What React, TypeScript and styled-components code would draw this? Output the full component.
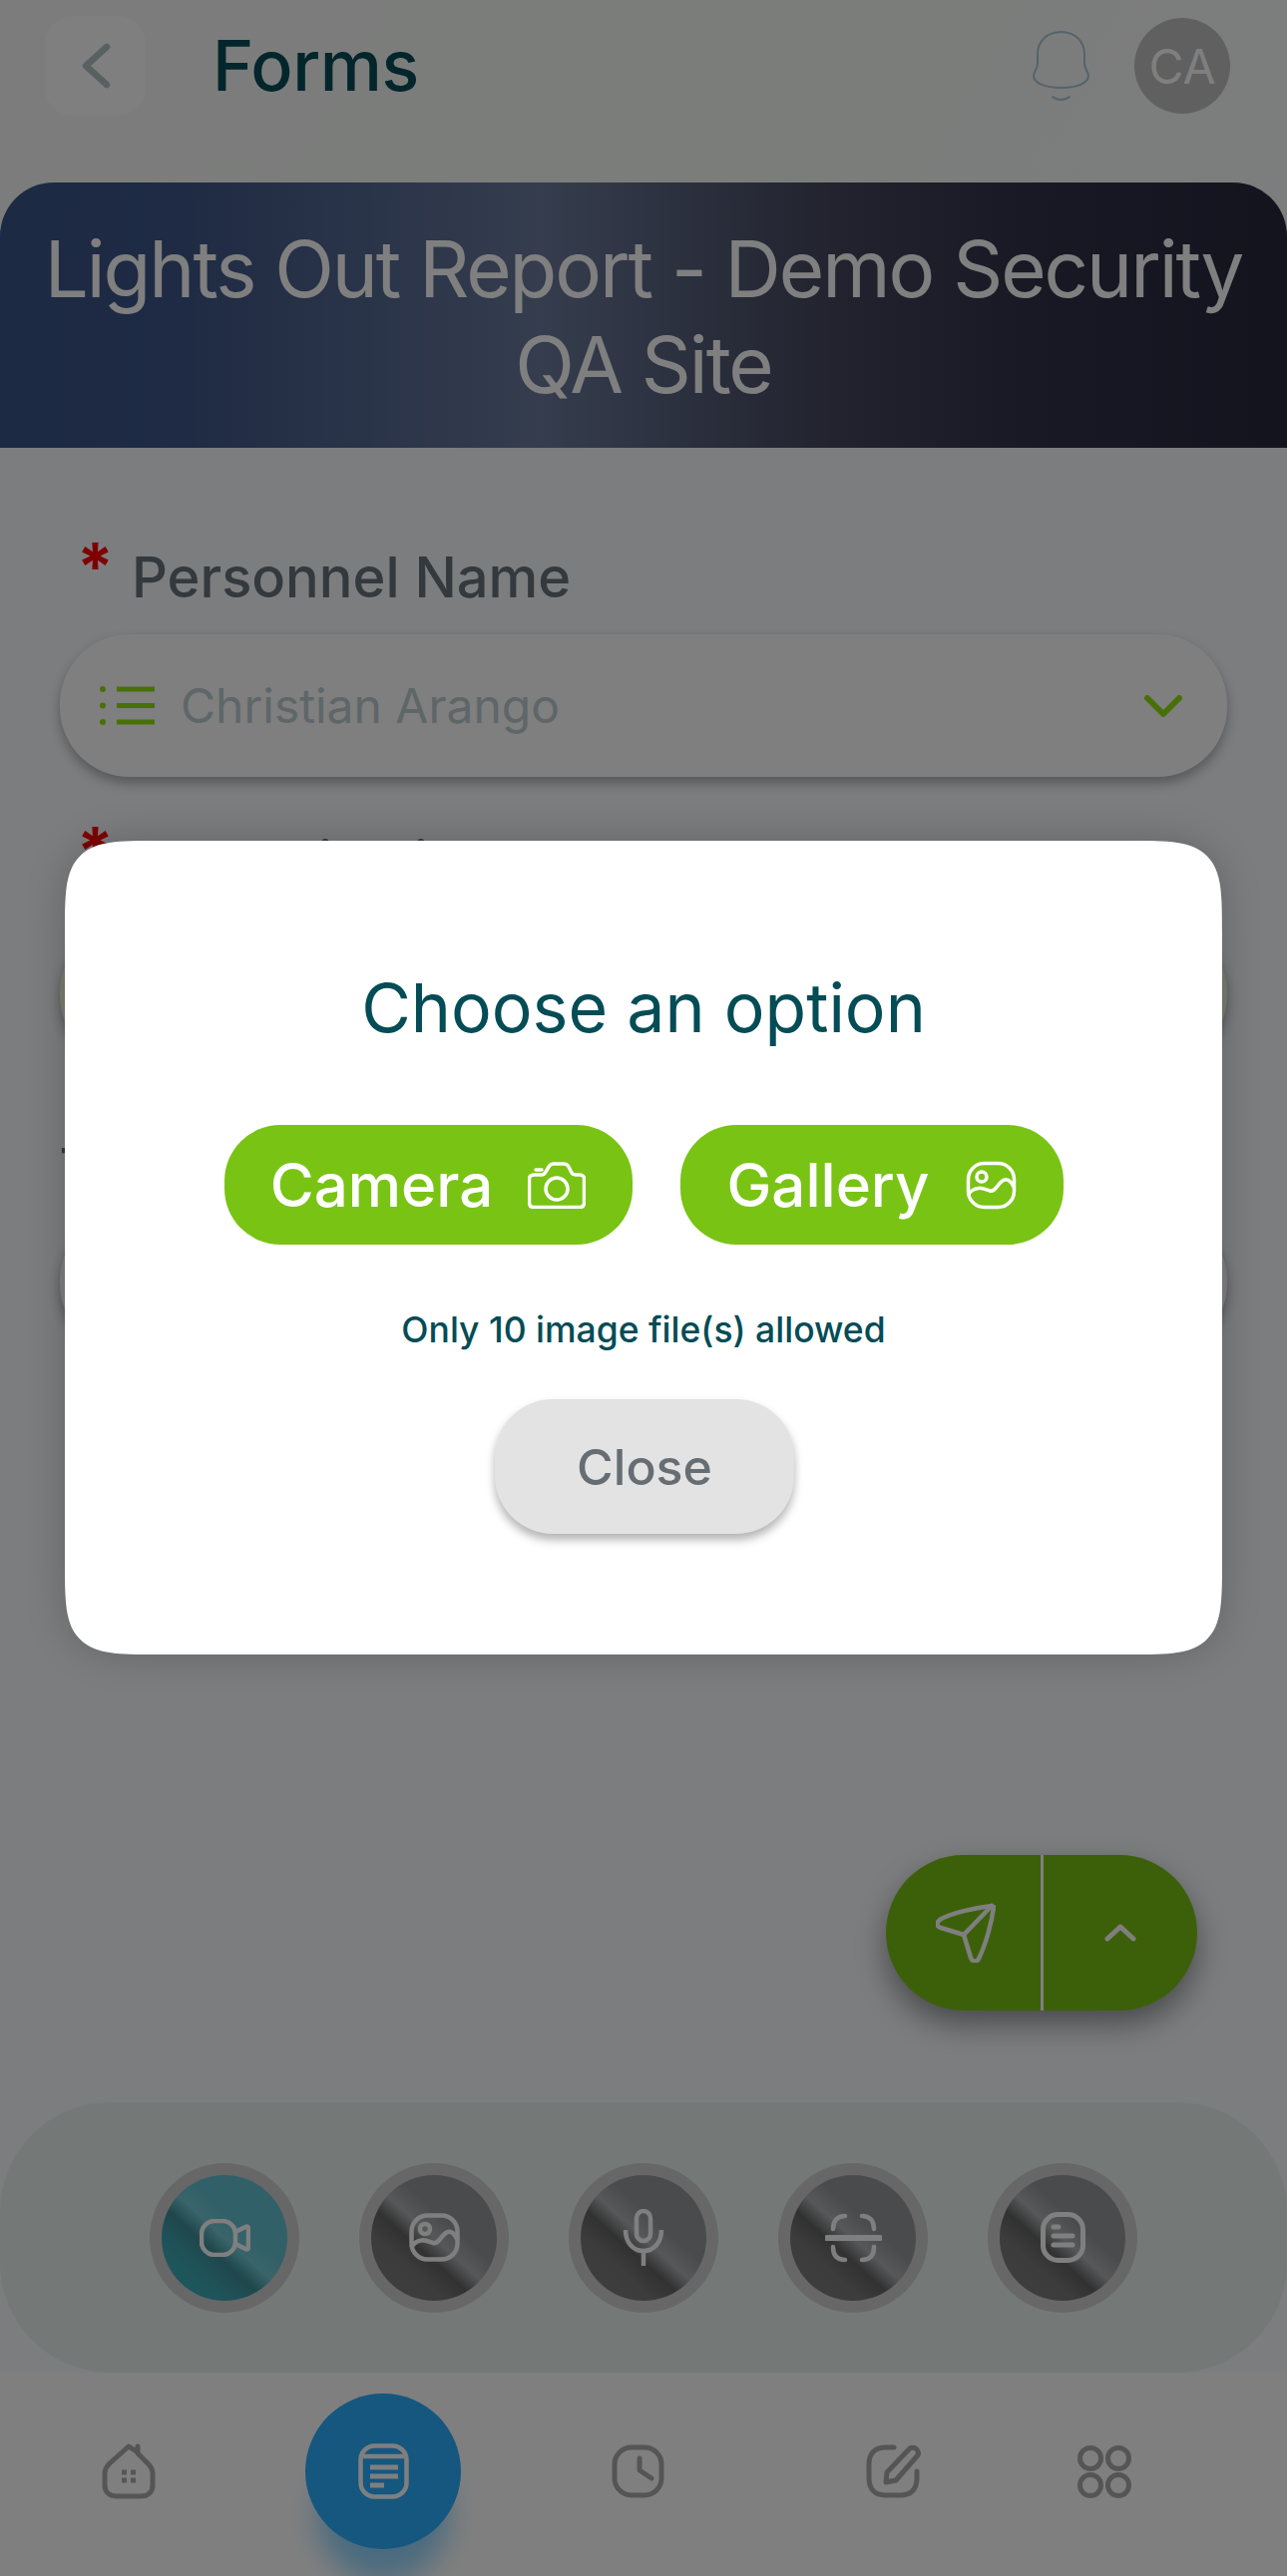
import React from "react";
import styled, { createGlobalStyle } from "styled-components";

const Global = createGlobalStyle`
  html, body { margin: 0; padding: 0; background: #f8fafe; }
  * { box-sizing: border-box; }
  body { font-family: Inter, "Noto Sans", sans-serif; }
`;

const Page = styled.div`
  position: relative;
  width: 1290px;
  height: 2583px;
  overflow: hidden;
  display: flex;
  flex-direction: column;
  background: #f8fafe;
`;

const TopArea = styled.div`
  background: linear-gradient(120deg, #f8f9f8 0%, #f6faf6 55%, #fafafd 100%);
`;

const Header = styled.header`
  height: 183px;
  padding: 16px 57px 67px 45px;
  display: flex;
  align-items: center;
`;

const BackButton = styled.div`
  width: 101px;
  height: 100px;
  border-radius: 28px;
  background: #ffffff;
  display: flex;
  align-items: center;
  justify-content: center;
`;

const PageTitle = styled.h1`
  margin: 0 0 0 67px;
  flex: 1;
  font-size: 70px;
  font-weight: 500;
  line-height: 1;
  letter-spacing: -0.4px;
  color: #044c56;
`;

const Bell = styled.svg`
  width: 57px;
  height: 72px;
  margin-right: 45px;
`;

const Avatar = styled.div`
  width: 96px;
  height: 96px;
  border-radius: 50%;
  background: #c0c0c0;
  color: #fff;
  font-size: 48px;
  display: flex;
  align-items: center;
  justify-content: center;
`;

const Banner = styled.div`
  height: 266px;
  border-radius: 54px 54px 0 0;
  padding: 3px 20px 0;
  background: linear-gradient(90deg, #3a5488 0%, #3e5688 14%, #6a7a9c 42%, #44465c 65%, #32324a 80%, #28283e 100%);
  display: flex;
  align-items: center;
  justify-content: center;
  text-align: center;
  color: #fff;
  font-size: 78px;
  letter-spacing: -2.05px;
  line-height: 96px;
`;

const Form = styled.div`
  padding: 93px 42px 0 60px;
  display: flex;
  flex-direction: column;
`;

const Group = styled.div`
  height: 285px;
`;

const LabelRow = styled.div<{ $indent: boolean; $h: number; $gap: number }>`
  height: ${(p) => p.$h}px;
  padding-left: ${(p) => (p.$indent ? "20px" : "0")};
  display: flex;
  align-items: center;
  margin-bottom: ${(p) => p.$gap}px;
  position: relative;
`;

const Star = styled.span`
  position: absolute;
  left: 17px;
  top: -7px;
  font-size: 66px;
  line-height: 1;
  font-weight: 700;
  color: #ff0000;
`;

const LabelText = styled.span<{ $offset: number }>`
  margin-left: ${(p) => p.$offset}px;
  font-size: 56px;
  font-weight: 500;
  color: #66727a;
`;

const Field = styled.div<{ $tint?: string }>`
  width: 1170px;
  height: 143px;
  border-radius: 70px;
  background: ${(p) => p.$tint || "#ffffff"};
  box-shadow: 0 6px 12px rgba(0, 0, 0, 0.3);
  padding: 0 45px 0 40px;
  display: flex;
  align-items: center;
  color: #bcccd0;
  font-size: 48px;
`;

const FieldValue = styled.span`
  flex: 1;
  margin-left: 24px;
`;

const Spring = styled.div`
  flex: 1;
`;

const FabRow = styled.div`
  display: flex;
  justify-content: flex-end;
  padding-right: 90px;
  margin-bottom: 92px;
`;

const Fab = styled.div`
  width: 312px;
  height: 156px;
  border-radius: 78px;
  background: #78c014;
  box-shadow: 0 14px 30px rgba(0, 0, 0, 0.4);
  display: flex;
  overflow: hidden;
`;

const FabSide = styled.div<{ $divider?: boolean }>`
  flex: 1;
  display: flex;
  align-items: center;
  justify-content: center;
  ${(p) => p.$divider && "border-right: 3px solid #fff;"}
`;

const SendIcon = styled.svg`
  margin-left: 6px;
`;

const Tray = styled.div`
  height: 271px;
  border-radius: 110px;
  background: #e8f2f0;
  display: flex;
  align-items: center;
  justify-content: center;
  gap: 60px;
`;

const Ring = styled.div`
  width: 150px;
  height: 150px;
  border-radius: 50%;
  background: #cecece;
  padding: 12px;
`;

const Metal = styled.div<{ $active?: boolean }>`
  width: 100%;
  height: 100%;
  border-radius: 50%;
  display: flex;
  align-items: center;
  justify-content: center;
  background: ${(p) =>
    p.$active
      ? "linear-gradient(222deg, #64c0d0 0%, #64c0d0 38%, #72c8d4 50%, #3e8e98 60%, #3fa4b0 72%, #38b0bc 88%, #3a8e96 100%)"
      : "linear-gradient(222deg, #949698 0%, #949698 38%, #aeb0b2 50%, #646464 60%, #787878 72%, #7c7c7e 88%, #6e6e6e 100%)"};
`;

const Nav = styled.nav`
  flex: 0 0 204px;
  background: #fff;
  padding: 21px 0 0 0;
  display: flex;
  align-items: flex-start;
`;

const NavSlot = styled.div<{ $left: number }>`
  margin-left: ${(p) => p.$left}px;
  height: 156px;
  display: flex;
  align-items: center;
`;

const NavActive = styled.div`
  width: 156px;
  height: 156px;
  border-radius: 50%;
  background: #2aaeff;
  box-shadow: 0 44px 28px -12px rgba(42, 174, 255, 0.5);
  display: flex;
  align-items: center;
  justify-content: center;
`;

const Overlay = styled.div`
  position: absolute;
  inset: 0;
  background: rgba(0, 0, 0, 0.5);
  display: flex;
  justify-content: center;
  align-items: flex-start;
  padding-top: 843px;
`;

const Modal = styled.div`
  width: 1160px;
  height: 816px;
  border-radius: 68px;
  @supports (corner-shape: squircle) {
    border-radius: 96px;
    corner-shape: squircle;
  }
  background: #fff;
  box-shadow: 0 0 40px rgba(0, 0, 0, 0.2);
  padding-top: 124px;
  display: flex;
  flex-direction: column;
  align-items: center;
`;

const ModalTitle = styled.h2`
  margin: 0;
  height: 86px;
  font-size: 68px;
  line-height: 86px;
  font-weight: 400;
  color: #044c56;
`;

const Choices = styled.div`
  margin-top: 75px;
  display: flex;
  gap: 48px;
`;

const Choice = styled.button<{ $w: number; $gap: number }>`
  width: ${(p) => p.$w}px;
  height: 120px;
  border: 0;
  border-radius: 56px;
  background: #79c314;
  color: #fff;
  font-family: inherit;
  font-size: 60px;
  font-weight: 450;
  display: flex;
  align-items: center;
  justify-content: center;
  gap: ${(p) => p.$gap}px;
  padding: 0;
`;

const Hint = styled.p`
  margin: 64px 0 0;
  height: 44px;
  line-height: 44px;
  font-size: 35.5px;
  font-weight: 500;
  color: #044c56;
`;

const CloseBtn = styled.button`
  margin: 47px 0 0 2px;
  width: 300px;
  height: 135px;
  border: 0;
  border-radius: 58px;
  background: #e3e3e3;
  box-shadow: 0 6px 10px rgba(0, 0, 0, 0.3);
  color: #666d73;
  font-family: inherit;
  font-size: 50px;
  font-weight: 500;
`;

const Line = { fill: "none", strokeLinecap: "round", strokeLinejoin: "round" } as const;

const GalleryIcon = ({ c = "#fff", w = 5 }: { c?: string; w?: number }) => (
  <svg width="51" height="49" viewBox="0 0 51 49" {...Line} stroke={c} strokeWidth={w}>
    <rect x="2.5" y="2.5" width="46" height="44" rx="16" />
    <circle cx="16" cy="16" r="5" />
    <path d="M3 33C10 24 18 28 24 30C30 32 33 20 39 19C43 18 46 22 48 26" />
  </svg>
);

const DocIcon = () => (
  <svg width="45" height="51" viewBox="0 0 45 51" {...Line} stroke="#fff" strokeWidth="5">
    <rect x="2.5" y="2.5" width="40" height="46" rx="15" />
    <path d="M13 15H18M13 24H32M13 33H32" />
  </svg>
);

const trayStroke = "#fff";

const fields = [
  { star: true, label: "Personnel Name", tint: "#fff", value: true, h: 74, gap: 20 },
  { star: true, label: "Area with lights out", tint: "#f2fae2", value: false, h: 74, gap: 24 },
  { star: false, label: "- Comments", tint: "#fff", value: false, h: 84, gap: 18 },
];

export default function App() {
  return (
    <Page>
      <Global />
      <TopArea>
        <Header>
          <BackButton>
            <svg width="30" height="46" viewBox="0 0 30 46" {...Line} stroke="#b0c0c4" strokeWidth="6.5">
              <path d="M26 4L5 23L26 42" />
            </svg>
          </BackButton>
          <PageTitle>Forms</PageTitle>
          <Bell viewBox="0 0 57 72" {...Line} stroke="#acc6d4" strokeWidth="2">
            <path d="M28.5 2C14 2 5 12 5 24V34C5 39 1 42 1 46C1 53 12 58 28.5 58C45 58 56 53 56 46C56 42 52 39 52 34V24C52 12 43 2 28.5 2Z" />
            <path d="M20 67C25 71 32 71 37 67" />
          </Bell>
          <Avatar>CA</Avatar>
        </Header>
        <Banner>
          Lights Out Report - Demo Security
          <br />
          QA Site
        </Banner>
      </TopArea>

      <Form>
        {fields.map((f) => (
          <Group key={f.label}>
            <LabelRow $indent={f.star} $h={f.h} $gap={f.gap}>
              {f.star && <Star>*</Star>}
              <LabelText $offset={f.star ? 52 : -2}>{f.label}</LabelText>
            </LabelRow>
            <Field $tint={f.tint}>
              <svg width="57" height="39" viewBox="0 0 57 39" {...Line} stroke="#90e010" strokeWidth="5">
                <path d="M3 3V3.1M3 19.5V19.6M3 36V36.1" strokeWidth="6" />
                <path d="M17 3H55M17 19.5H55M17 36H55" strokeLinecap="butt" />
              </svg>
              <FieldValue>{f.value ? "Christian Arango" : ""}</FieldValue>
              <svg width="38" height="22" viewBox="0 0 38 22" {...Line} stroke="#90e010" strokeWidth="6">
                <path d="M3 3L19 19L35 3" />
              </svg>
            </Field>
          </Group>
        ))}
      </Form>

      <Spring />

      <FabRow>
        <Fab>
          <FabSide $divider>
            <SendIcon width="60" height="60" viewBox="0 0 60 60" {...Line} stroke="#fff" strokeWidth="4.5">
              <path d="M56 3C40 5 15 10 4 17C0 20 1 24 5 25L28 32L35 55C36 59 41 60 43 56C50 42 56 20 58 4Z" />
              <path d="M28 32L56 3" />
            </SendIcon>
          </FabSide>
          <FabSide>
            <svg width="32" height="18" viewBox="0 0 32 18" {...Line} stroke="#fff" strokeWidth="5">
              <path d="M3 15L16 3L29 15" />
            </svg>
          </FabSide>
        </Fab>
      </FabRow>

      <Tray>
        <Ring>
          <Metal $active>
            <svg width="51" height="38" viewBox="0 0 51 38" {...Line} stroke={trayStroke} strokeWidth="4.5">
              <rect x="2" y="2" width="34" height="34" rx="13" />
              <path d="M36 13L46 8C48 7 49 8 49 10V28C49 30 48 31 46 30L36 25" />
            </svg>
          </Metal>
        </Ring>
        <Ring>
          <Metal>
            <GalleryIcon w={4.5} />
          </Metal>
        </Ring>
        <Ring>
          <Metal>
            <svg width="42" height="57" viewBox="0 0 42 57" {...Line} stroke={trayStroke} strokeWidth="4.5" strokeLinecap="butt">
              <rect x="14" y="2" width="14" height="30" rx="7" />
              <path d="M3 21C3 33 10 42 21 42C32 42 39 33 39 21M21 42V57" />
            </svg>
          </Metal>
        </Ring>
        <Ring>
          <Metal>
            <svg width="57" height="50" viewBox="0 0 57 50" {...Line} stroke={trayStroke} strokeWidth="4.5">
              <path d="M8 16C8 8 12 3 20 3M37 3C45 3 49 8 49 16M8 34C8 43 12 47 20 47M37 47C45 47 49 43 49 34" />
              <path d="M2 25H55" strokeWidth="6" />
            </svg>
          </Metal>
        </Ring>
        <Ring>
          <Metal>
            <DocIcon />
          </Metal>
        </Ring>
      </Tray>

      <Nav>
        <NavSlot $left={102}>
          <svg width="54" height="56" viewBox="0 0 54 56" {...Line} stroke="#aaa" strokeWidth="5">
            <path d="M36 9L27 3L8 20C4 24 3 26 3 32V42C3 49 8 53 15 53H39C46 53 51 49 51 42V30C51 26 50 24 46 20L36 10V3" />
            <path d="M20 29H25M29 29H34M20 37H25M29 37H34" strokeWidth="5" strokeLinecap="butt" />
          </svg>
        </NavSlot>
        <NavSlot $left={150}>
          <NavActive>
            <svg width="51" height="56" viewBox="0 0 51 56" {...Line} stroke="#fff" strokeWidth="4.5">
              <rect x="2.5" y="2.5" width="46" height="51" rx="14" />
              <path d="M3 13H48" />
              <path d="M12 24H40M12 33H40M12 42H26" strokeWidth="5" strokeLinecap="butt" />
            </svg>
          </NavActive>
        </NavSlot>
        <NavSlot $left={151}>
          <svg width="53" height="54" viewBox="0 0 53 54" {...Line} stroke="#aaa" strokeWidth="5">
            <rect x="3" y="3" width="47" height="48" rx="17" />
            <path d="M28 14V26L40 34" />
          </svg>
        </NavSlot>
        <NavSlot $left={202}>
          <svg width="55" height="56" viewBox="0 0 55 56" {...Line} stroke="#aaa" strokeWidth="5">
            <path d="M28 4H20C9 4 3 10 3 21V35C3 46 9 52 20 52H34C45 52 51 46 51 35V28" />
            <path d="M44 5C47 3 51 5 52 8C53 10 52 12 51 13L30 37L20 39L21 29Z" />
          </svg>
        </NavSlot>
        <NavSlot $left={157}>
          <svg width="54" height="53" viewBox="0 0 54 53" fill="none" stroke="#aaa" strokeWidth="5">
            <circle cx="13" cy="13" r="10.5" />
            <circle cx="41" cy="13" r="10.5" />
            <circle cx="13" cy="40" r="10.5" />
            <circle cx="41" cy="40" r="10.5" />
          </svg>
        </NavSlot>
      </Nav>

      <Overlay>
        <Modal>
          <ModalTitle>Choose an option</ModalTitle>
          <Choices>
            <Choice $w={409} $gap={35}>
              Camera
              <svg width="58" height="47" viewBox="0 0 58 47" {...Line} stroke="#fff" strokeWidth="3.5">
                <path d="M7 13H14C16 13 17 12 18 10L21 5C22 3 23 2 26 2H36C39 2 40 3 41 5L43 9C44 12 46 13 48 13H52C55 13 56.5 15 56.5 17V41C56.5 44 55 45.5 52 45.5H6C3 45.5 1.5 44 1.5 41V17C1.5 15 3 13 7 13Z" />
                <path d="M8 8H14" />
                <circle cx="29" cy="27" r="11" />
              </svg>
            </Choice>
            <Choice $w={384} $gap={36}>
              Gallery
              <GalleryIcon w={3.5} />
            </Choice>
          </Choices>
          <Hint>Only 10 image file(s) allowed</Hint>
          <CloseBtn>Close</CloseBtn>
        </Modal>
      </Overlay>
    </Page>
  );
}
